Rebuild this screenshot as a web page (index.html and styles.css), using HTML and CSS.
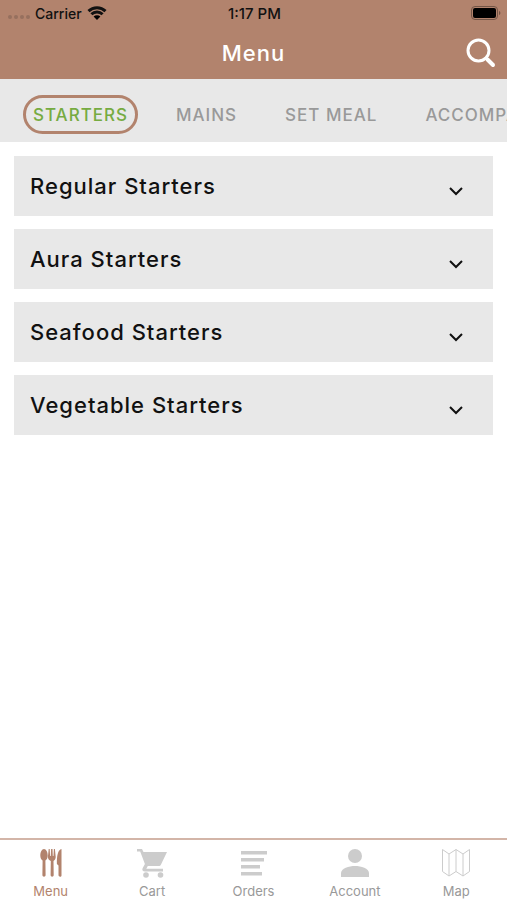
FILE: index.html
```html
<!DOCTYPE html>
<html lang="en">
<head>
    <meta charset="UTF-8">
    <meta name="viewport" content="width=device-width, initial-scale=1.0">
    <title>Menu</title>
    <link rel="stylesheet" href="styles.css">
</head>
<body>
    <header>
        <div class="status-bar">
            <div class="carrier">
                <span class="signal"><i></i><i></i><i></i><i></i></span>
                <span>Carrier</span>
                <svg width="20" height="14" viewBox="0 0 20 14">
                    <path d="M10 14L6.6 10.6a4.8 4.8 0 0 1 6.8 0z"/>
                    <path class="wave" d="M4.4 8.3a8 8 0 0 1 11.2 0M1.5 5.1a12.2 12.2 0 0 1 17 0"/>
                </svg>
            </div>
            <span class="time">1:17 PM</span>
            <div class="battery">
                <svg width="30" height="14" viewBox="0 0 30 14">
                    <rect class="battery-case" x="0.5" y="0.5" width="26" height="13" rx="3.5"/>
                    <rect x="2" y="2" width="23" height="10" rx="2"/>
                    <path class="battery-tip" d="M28 5c1.800 .5 1.800 3.500 0 4z"/>
                </svg>
            </div>
        </div>
        <div class="title-bar">
            <h1>Menu</h1>
            <button class="search" aria-label="Search">
                <svg width="30" height="30" viewBox="0 0 30 30">
                    <circle cx="12.500" cy="12.500" r="10.500"/>
                    <path class="lens" d="M20 20l1.500 1.500"/>
                    <path class="handle" d="M21.500 21.500L27 27"/>
                </svg>
            </button>
        </div>
    </header>

    <nav class="tabs">
        <button class="tab active">STARTERS</button>
        <button class="tab">MAINS</button>
        <button class="tab">SET MEAL</button>
        <button class="tab">ACCOMPANIMENTS</button>
    </nav>

    <main>
        <button class="category" aria-expanded="false">
            <span>Regular Starters</span>
            <svg width="14" height="9" viewBox="0 0 14 9"><path d="M1 1l6 6 6-6"/></svg>
        </button>
        <button class="category" aria-expanded="false">
            <span>Aura Starters</span>
            <svg width="14" height="9" viewBox="0 0 14 9"><path d="M1 1l6 6 6-6"/></svg>
        </button>
        <button class="category" aria-expanded="false">
            <span>Seafood Starters</span>
            <svg width="14" height="9" viewBox="0 0 14 9"><path d="M1 1l6 6 6-6"/></svg>
        </button>
        <button class="category" aria-expanded="false">
            <span>Vegetable Starters</span>
            <svg width="14" height="9" viewBox="0 0 14 9"><path d="M1 1l6 6 6-6"/></svg>
        </button>
    </main>

    <nav class="bottom-nav">
        <a href="#menu" class="current">
            <svg width="30" height="30" viewBox="0 0 30 30">
                <!-- spoon -->
                <path d="M8 1c2.200 0 3.700 3.200 3.700 6.400 0 2.600-1 4.300-2.300 5.100L9.600 27c0 2.300-3.200 2.300-3.200 0l.2-14.500C5.300 11.700 4.300 10 4.300 7.400 4.300 4.200 5.800 1 8 1z"/>
                <!-- fork -->
                <path d="M12.700 1h1l.4 7h.7l.3-7h1.400l.3 7h.7l.4-7h1l.8 8c0 2-1 3.300-2.200 4L17.700 27c0 2.300-3.100 2.300-3.100 0l.2-14c-1.700-.7-2.900-2-2.900-4z"/>
                <!-- knife -->
                <path d="M25.500 1v26.500c0 1.700-3 1.700-3-.5V17.500L20.900 16C20.700 8 22 1.500 25.500 1z"/>
            </svg>
            <span>Menu</span>
        </a>
        <a href="#cart">
            <svg width="30" height="30" viewBox="0 0 30 30">
                <path d="M0 1h5l1.500 3H30l-6 12.500c-.5 1-1.200 1.500-2.500 1.500H10.800l-1.500 2.700H26v2.800H8c-2.400 0-3.300-1.800-2.300-3.500l2.200-4L3.200 3.500H0z"/>
                <circle cx="9" cy="27" r="2.800"/>
                <circle cx="23.500" cy="27" r="2.800"/>
            </svg>
            <span>Cart</span>
        </a>
        <a href="#orders">
            <svg width="30" height="30" viewBox="0 0 30 30">
                <path d="M2 3h26v3.500H2zM2 10h23v3.500H2zM2 17h19v3.500H2zM2 24h21v3.500H2z"/>
            </svg>
            <span>Orders</span>
        </a>
        <a href="#account">
            <svg width="30" height="30" viewBox="0 0 30 30">
                <circle cx="15" cy="8" r="7"/>
                <path d="M1 29v-4c0-4.500 8-7 14-7s14 2.500 14 7v4z"/>
            </svg>
            <span>Account</span>
        </a>
        <a href="#map">
            <svg width="30" height="30" viewBox="0 0 30 30">
                <path class="outline" d="M1.500 1.500L8 6l7-4.500L22 6l6.500-4.500v22L22 28l-7-4.500L8 28l-6.500-4.500zM8 6v22M15 1.500v22M22 6v22"/>
            </svg>
            <span>Map</span>
        </a>
    </nav>
</body>
</html>
```
FILE: styles.css
```css
* {
    box-sizing: border-box;
}
body {
    font-family: Inter, Arial, sans-serif;
    background-color: #fff;
    display: flex;
    flex-direction: column;
    min-height: 100vh;
    margin: 0;
}
button {
    font-family: inherit;
    border: none;
    background: none;
    padding: 0;
    cursor: pointer;
}
svg {
    display: block;
    flex-shrink: 0;
}
header {
    background-color: #b2836d;
}
.status-bar {
    display: grid;
    grid-template-columns: 1fr auto 1fr;
    align-items: center;
    height: 26px;
    padding: 0 6px 0 8px;
    font-size: 14px;
    font-weight: 500;
    color: #111;
}
.time {
    font-size: 15px;
}
.carrier {
    display: flex;
    align-items: center;
    gap: 5px;
}
.signal {
    display: flex;
    gap: 2px;
    padding-top: 8px;
}
.signal i {
    width: 4px;
    height: 4px;
    border-radius: 50%;
    background-color: #96705e;
}
.wave {
    fill: none;
    stroke: #111;
    stroke-width: 3;
}
.battery {
    justify-self: end;
}
.battery-case {
    fill: none;
    stroke: #735546;
}
.battery-tip {
    fill: #735546;
}
.title-bar {
    display: grid;
    grid-template-columns: 1fr auto 1fr;
    align-items: center;
    height: 53px;
    padding: 0 11px;
}
h1 {
    grid-column: 2;
    margin: 0;
    font-size: 22px;
    font-weight: 500;
    letter-spacing: 1px;
    color: #fff;
}
.search {
    justify-self: end;
}
.search svg {
    fill: none;
    stroke: #fff;
    stroke-width: 3;
}
.search .handle {
    stroke-width: 4;
    stroke-linecap: round;
}
.tabs {
    display: flex;
    align-items: center;
    gap: 28px;
    height: 63px;
    padding: 8px 0 0 23px;
    overflow: hidden;
    background-color: #e8e8e8;
}
.tab {
    flex-shrink: 0;
    height: 39px;
    padding: 0 7px;
    border: 3px solid transparent;
    border-radius: 20px;
    font-size: 17px;
    font-weight: 500;
    letter-spacing: 1px;
    color: #999;
}
.tab.active {
    border-color: #b2836d;
    color: #76ab41;
}
main {
    flex: 1;
    display: flex;
    flex-direction: column;
    gap: 13px;
    padding: 14px;
}
.category {
    display: flex;
    justify-content: space-between;
    align-items: center;
    height: 60px;
    padding: 0 30px 0 16px;
    background-color: #e8e8e8;
    font-size: 22px;
    font-weight: 500;
    letter-spacing: 1px;
    color: #111;
}
.category svg {
    margin-top: 10px;
    fill: none;
    stroke: #111;
    stroke-width: 2;
}
.bottom-nav {
    display: flex;
    height: 62px;
    border-top: 2px solid #d3b5a8;
}
.bottom-nav a {
    flex: 1;
    display: flex;
    flex-direction: column;
    align-items: center;
    gap: 5px;
    padding-top: 8px;
    font-size: 13px;
    line-height: 16px;
    color: #999;
    text-decoration: none;
}
.bottom-nav svg {
    fill: #ccc;
}
.bottom-nav .outline {
    fill: none;
    stroke: #ccc;
}
.bottom-nav .current {
    color: #b2836d;
}
.bottom-nav .current svg {
    fill: #b2836d;
}
```
